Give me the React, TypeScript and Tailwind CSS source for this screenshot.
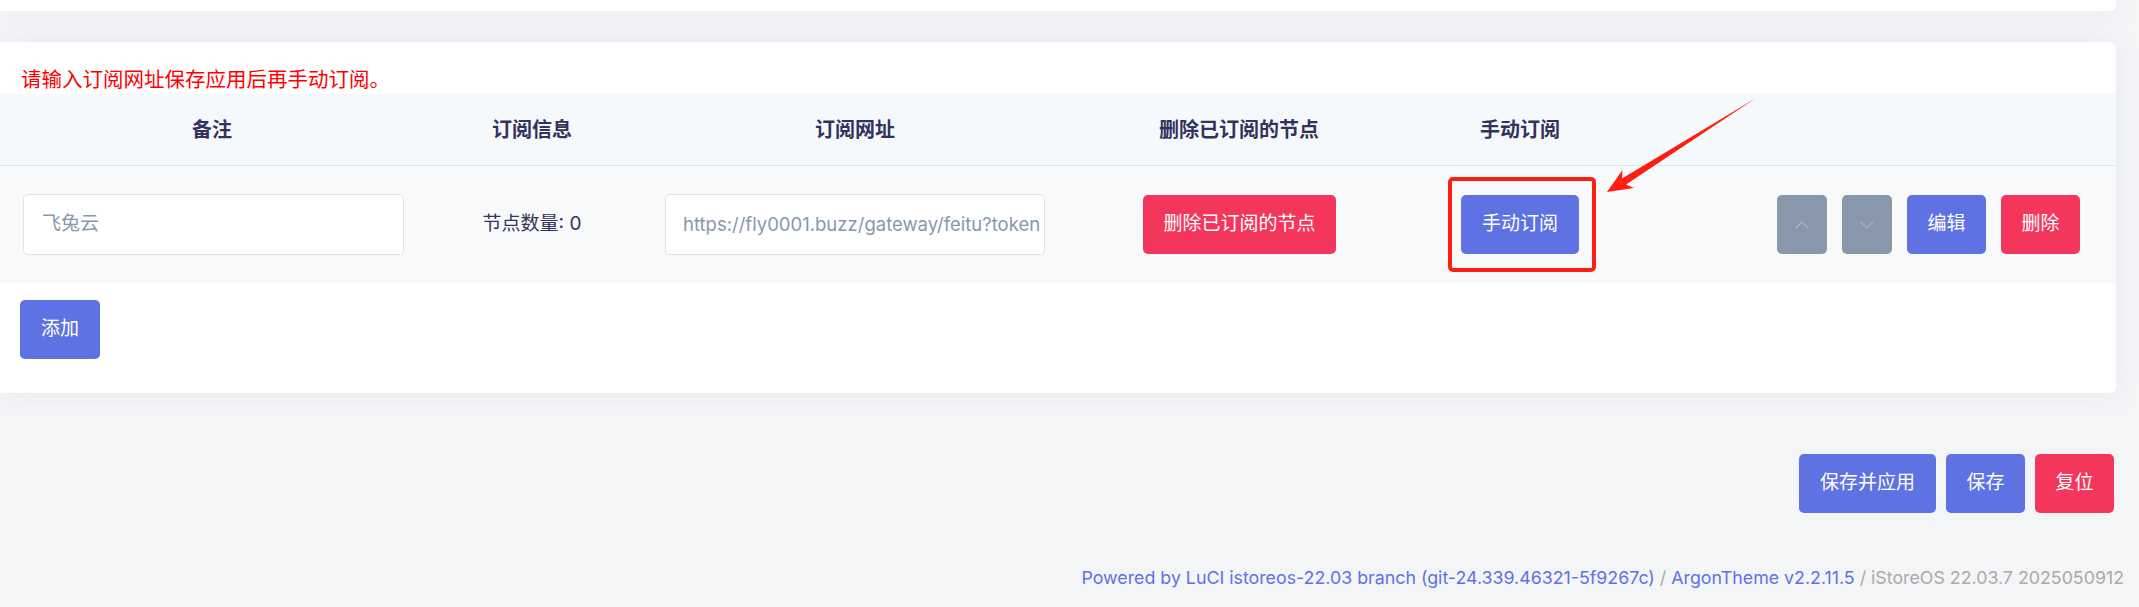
import { ChevronDown, ChevronUp } from "lucide-react";

const FONT = { fontFamily: "Inter, 'Noto Sans CJK SC', sans-serif" };

type BtnProps = { children: React.ReactNode; color: "blue" | "red" | "gray"; className?: string };

function Btn({ children, color, className = "" }: BtnProps) {
  const bg = color === "blue" ? "bg-[#5e72e4]" : color === "red" ? "bg-[#f5365c]" : "bg-[#8898aa]";
  return (
    <div className={`${bg} h-[59px] rounded-[5px] flex items-center justify-center text-white text-[19px] ${className}`}>
      {children}
    </div>
  );
}

function Annotation() {
  return (
    <svg className="absolute left-0 top-0 pointer-events-none" width="2139" height="607" viewBox="0 0 2139 607">
      <rect x="1450" y="179" width="144" height="91" rx="3" fill="none" stroke="#ff1e12" strokeWidth="4" />
      <polygon
        points="1756,98 1626,184.5 1634,188 1607,192 1622.5,170 1622,178.4"
        fill="#ff1e12"
      />
    </svg>
  );
}

export default function App() {
  return (
    <div className="relative w-[2139px] h-[607px] overflow-hidden bg-[#f4f5f7] text-[#32325d]" style={FONT}>
      <div className="w-[2116px] h-[11px] bg-white rounded-br-[6px] shadow-[0_0_24px_rgba(136,152,170,0.12)]" />

      <div className="mt-[31px] w-[2116px] h-[351px] bg-white rounded-r-[6px] shadow-[0_0_24px_rgba(136,152,170,0.12)]">
        <div className="pt-[24px] pl-[21px] leading-[28px] text-[20.5px] text-[#ff0000]">
          请输入订阅网址保存应用后再手动订阅。
        </div>

        <div className="grid grid-cols-[422px_220px_426px_342px_220px_1fr] h-[72px] items-center bg-[#f6f9fc] border-b border-[#e3e6ea] font-bold text-[20px]">
          <div className="text-center pl-[2px]">备注</div>
          <div className="text-center">订阅信息</div>
          <div className="text-center">订阅网址</div>
          <div className="text-center">删除已订阅的节点</div>
          <div className="text-center">手动订阅</div>
          <div />
        </div>

        <div className="grid grid-cols-[422px_220px_426px_342px_220px_1fr] h-[117px] items-center bg-[#f8f9fa]">
          <div className="pl-[23px]">
            <div className="w-[381px] h-[61px] bg-white border border-[#dee2e6] rounded-[5px] flex items-center px-[18px] text-[19px] text-[#8898aa]">
              飞兔云
            </div>
          </div>
          <div className="text-center text-[19px]">节点数量: 0</div>
          <div className="flex justify-center">
            <div className="w-[380px] h-[61px] bg-white border border-[#dee2e6] rounded-[5px] flex items-center px-[17px] text-[18.5px] text-[#8898aa] overflow-hidden whitespace-nowrap">
              https://fly0001.buzz/gateway/feitu?token
            </div>
          </div>
          <div className="flex justify-center pl-[1px]">
            <Btn color="red" className="w-[193px]">删除已订阅的节点</Btn>
          </div>
          <div className="flex justify-center">
            <Btn color="blue" className="w-[118px]">手动订阅</Btn>
          </div>
          <div className="flex justify-end gap-[15px] pr-[36px]">
            <Btn color="gray" className="w-[50px]">
              <ChevronUp size={24} strokeWidth={1.2} color="#a9b3bf" />
            </Btn>
            <Btn color="gray" className="w-[50px]">
              <ChevronDown size={24} strokeWidth={1.2} color="#a9b3bf" />
            </Btn>
            <Btn color="blue" className="w-[79px]">编辑</Btn>
            <Btn color="red" className="w-[79px]">删除</Btn>
          </div>
        </div>

        <div className="pt-[17px] pl-[20px]">
          <Btn color="blue" className="w-[80px]">添加</Btn>
        </div>
      </div>

      <div className="mt-[61px] flex justify-end gap-[10px] pr-[25px]">
        <Btn color="blue" className="w-[137px]">保存并应用</Btn>
        <Btn color="blue" className="w-[79px]">保存</Btn>
        <Btn color="red" className="w-[79px]">复位</Btn>
      </div>

      <div className="mt-[53px] pr-[15px] text-right text-[17.8px] leading-[24px] text-[#aaaaaa] whitespace-nowrap">
        <span className="text-[#5e72e4]">Powered by LuCI istoreos-22.03 branch (git-24.339.46321-5f9267c)</span>
        {" / "}
        <span className="text-[#5e72e4]">ArgonTheme v2.2.11.5</span>
        {" / iStoreOS 22.03.7 2025050912"}
      </div>

      <Annotation />
    </div>
  );
}
